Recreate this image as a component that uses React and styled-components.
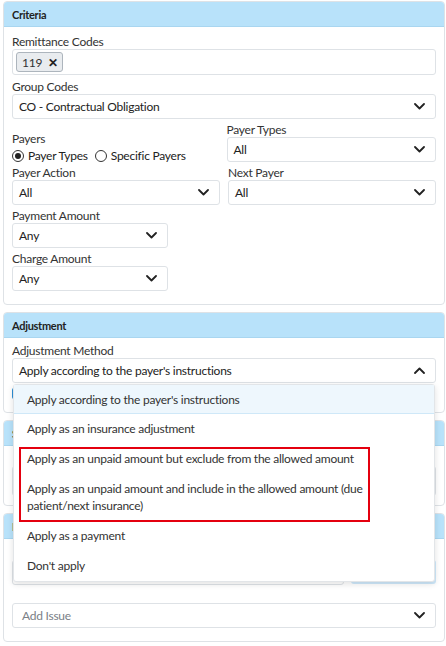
import React from 'react';
import styled, { createGlobalStyle } from 'styled-components';

const GlobalStyle = createGlobalStyle`
    body {
        margin: 0;
        background: #fff;
        font-family: Lato, "Noto Sans", sans-serif;
        font-size: 12px;
        letter-spacing: -0.25px;
        color: #333;
    }
`

const Page = styled.div`
    padding: 1px 1px 2px 3px;
    display: flex;
    flex-direction: column;
    gap: 7px;
`
const Card = styled.section`
    border: 1px solid #dee2e6;
    border-radius: 4px;
    background: #fff;
`
const CardHeader = styled.div`
    height: 24px;
    display: flex;
    align-items: center;
    padding: 0 8px;
    background: #b8e2fa;
    border-bottom: 1px solid #a9d6f0;
    border-radius: 3px 3px 0 0;
    font-size: 11px;
    font-weight: 700;
    letter-spacing: -0.3px;
    color: #222;
`
const CardBody = styled.div`
    padding: ${p => p.$pad || '7px 8px 10px'};
`
const Field = styled.div`
    margin-bottom: ${p => p.$mb ?? 3}px;
    padding-top: ${p => p.$pt || 0}px;
    width: ${p => p.$width || 'auto'};
`
const Label = styled.div`
    line-height: 15px;
    color: #333;
`
const Row = styled.div`
    display: grid;
    grid-template-columns: 1fr 1fr;
    column-gap: ${p => p.$gap || 8}px;
    align-items: start;
`
const SelectWrap = styled.div`
    position: relative;
`
const SelectBox = styled.div`
    height: ${p => p.$h || 25}px;
    box-sizing: border-box;
    border: 1px solid #dee2e6;
    border-radius: 3px;
    display: flex;
    align-items: center;
    justify-content: space-between;
    padding: 0 10px 0 ${p => p.$indent || 6}px;
    color: ${p => p.$placeholder ? '#7a8086' : '#222'};
    background: #fff;
`
const MultiBox = styled(SelectBox)`
    height: 26px;
    padding: 0 3px;
    justify-content: flex-start;
`
const Chip = styled.span`
    display: inline-flex;
    align-items: center;
    gap: 6px;
    height: 20px;
    box-sizing: border-box;
    padding: 0 4px 0 5px;
    border: 1px solid #adb5bd;
    border-radius: 3px;
    background: #e9ecef;
    color: #333;
`
const ChipX = styled.span`
    font-weight: 700;
    font-size: 12px;
    color: #222;
`
const Radios = styled.div`
    display: flex;
    align-items: center;
    gap: 7px;
    height: 19px;
`
const RadioItem = styled.label`
    display: flex;
    align-items: center;
    gap: 4px;
    color: #222;
`
const RadioDot = styled.span`
    width: 12px;
    height: 12px;
    box-sizing: border-box;
    border-radius: 50%;
    border: 1px solid #333;
    display: inline-flex;
    align-items: center;
    justify-content: center;
    &::after {
        content: '';
        width: 6px;
        height: 6px;
        border-radius: 50%;
        background: ${p => p.$checked ? '#222' : 'transparent'};
    }
`
const Menu = styled.div`
    position: absolute;
    top: calc(100% + 1px);
    left: 1px;
    right: 1px;
    z-index: 10;
    background: #fff;
    border: 1px solid #e2e5e8;
    border-radius: 3px;
    box-shadow: 0 2px 6px rgba(0, 0, 0, 0.12);
`
const MenuItem = styled.div`
    padding: ${p => p.$active ? '5px 60px 5px 13px' : '5px 60px 6px 13px'};
    line-height: 17px;
    color: #333;
    background: ${p => p.$active ? '#eef7fd' : 'transparent'};
    border-top: 1px solid transparent;
    border-bottom: 1px solid ${p => p.$active ? '#cfe8f8' : 'transparent'};
`
const Marked = styled.div`
    position: relative;
    &::after {
        content: '';
        position: absolute;
        top: 3px;
        bottom: -1px;
        left: 5px;
        right: 64px;
        border: 2px solid #e4000f;
        pointer-events: none;
    }
`
const InlineRow = styled.div`
    display: flex;
    gap: 7px;
    margin-bottom: 18px;
`
const Button = styled.div`
    width: 85px;
    height: 24px;
    border-radius: 3px;
    background: #cfe9fb;
    display: flex;
    align-items: center;
    justify-content: center;
    color: #1d5f8a;
`
const Check = styled.div`
    display: flex;
    align-items: center;
    gap: 5px;
    margin-top: 3px;
    line-height: 15px;
    &::before {
        content: '';
        width: 11px;
        height: 11px;
        border-radius: 2px;
        background: #2b8fd6;
    }
`

const Chevron = ({ up }) => (
    <svg width="11" height="7" viewBox="0 0 11 7" fill="none">
        <path d={up ? 'M1 6l4.5-4.5L10 6' : 'M1 1l4.5 4.5L10 1'} stroke="#222" strokeWidth="1.8" strokeLinecap="round" strokeLinejoin="round" />
    </svg>
)

const Select = ({ value, placeholder, up, indent, h }) => (
    <SelectBox $placeholder={placeholder} $indent={indent} $h={h}>
        <span>{value}</span>
        <Chevron up={up} />
    </SelectBox>
)

const App = () => (
    <Page>
        <GlobalStyle />
        <Card>
            <CardHeader>Criteria</CardHeader>
            <CardBody>
                <Field $mb={4}>
                    <Label>Remittance Codes</Label>
                    <MultiBox>
                        <Chip>119 <ChipX>✕</ChipX></Chip>
                    </MultiBox>
                </Field>
                <Field>
                    <Label>Group Codes</Label>
                    <Select value="CO - Contractual Obligation" />
                </Field>
                <Row $gap={5}>
                    <Field $pt={9} $mb={0}>
                        <Label>Payers</Label>
                        <Radios>
                            <RadioItem><RadioDot $checked />Payer Types</RadioItem>
                            <RadioItem><RadioDot />Specific Payers</RadioItem>
                        </Radios>
                    </Field>
                    <Field>
                        <Label>Payer Types</Label>
                        <Select value="All" />
                    </Field>
                </Row>
                <Row>
                    <Field>
                        <Label>Payer Action</Label>
                        <Select value="All" />
                    </Field>
                    <Field>
                        <Label>Next Payer</Label>
                        <Select value="All" />
                    </Field>
                </Row>
                <Field $width="156px">
                    <Label>Payment Amount</Label>
                    <Select value="Any" />
                </Field>
                <Field $width="156px">
                    <Label>Charge Amount</Label>
                    <Select value="Any" />
                </Field>
            </CardBody>
        </Card>

        <Card>
            <CardHeader>Adjustment</CardHeader>
            <CardBody $pad="5px 8px 11px">
                <Field>
                    <Label>Adjustment Method</Label>
                    <SelectWrap>
                        <Select value="Apply according to the payer's instructions" up />
                        <Menu>
                            <MenuItem $active>Apply according to the payer's instructions</MenuItem>
                            <MenuItem>Apply as an insurance adjustment</MenuItem>
                            <Marked>
                                <MenuItem>Apply as an unpaid amount but exclude from the allowed amount</MenuItem>
                                <MenuItem>Apply as an unpaid amount and include in the allowed amount (due patient/next insurance)</MenuItem>
                            </Marked>
                            <MenuItem>Apply as a payment</MenuItem>
                            <MenuItem>Don't apply</MenuItem>
                        </Menu>
                    </SelectWrap>
                </Field>
                <Check>Allow partial adjustments</Check>
            </CardBody>
        </Card>

        <Card>
            <CardHeader>Status</CardHeader>
            <CardBody $pad="20px 8px 9px">
                <Select value="Keep current status" h={30} />
            </CardBody>
        </Card>

        <Card>
            <CardHeader>Issues</CardHeader>
            <CardBody $pad="21px 8px 13px">
                <InlineRow>
                    <SelectBox style={{ flex: 1 }} $placeholder>Issue description</SelectBox>
                    <Button>Add</Button>
                </InlineRow>
                <Select value="Add Issue" placeholder indent={9} />
            </CardBody>
        </Card>
    </Page>
);

export default App;
